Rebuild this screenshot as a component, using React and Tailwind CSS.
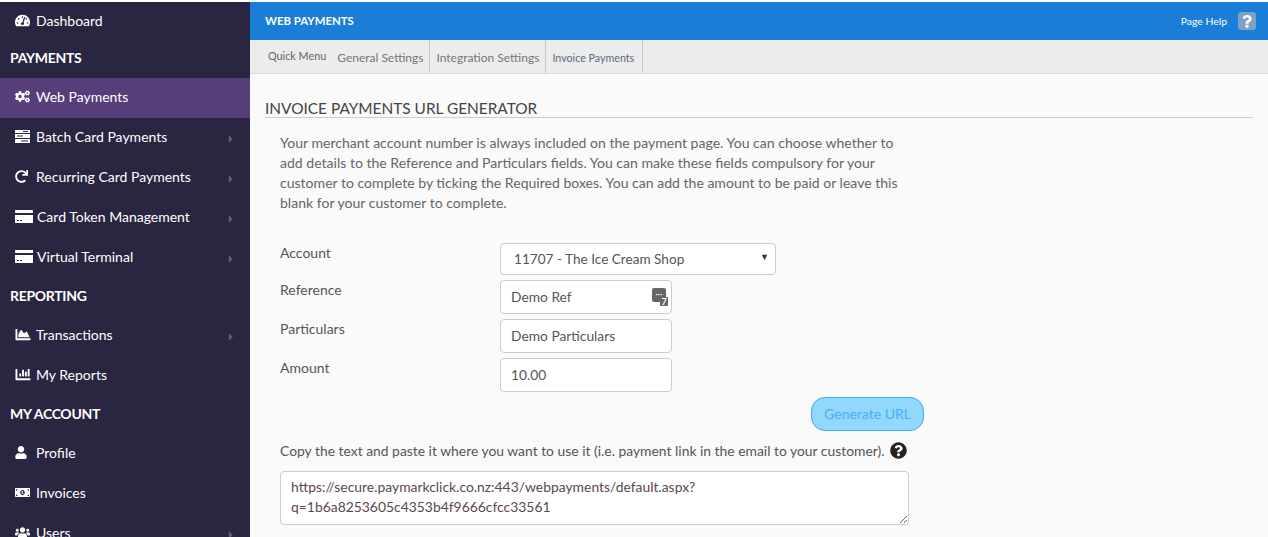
import React from 'react';
import { FaTachometerAlt, FaCogs, FaRedo, FaChartArea, FaChartBar, FaUser, FaMoneyBillAlt, FaUsers, FaCaretRight, FaQuestionCircle, FaQuestion } from 'react-icons/fa';

const FONT = "font-['Lato','Open_Sans',sans-serif]";

// FA4 style stacked bars
const BarsIcon = ({ className }) => (
  <svg className={className} viewBox="0 0 15 13" fill="currentColor">
    <rect x="0" y="0" width="15" height="3" />
    <rect x="0" y="4" width="15" height="4" />
    <rect x="0" y="9" width="15" height="4" />
    <rect x="8" y="1" width="5" height="1" fill="#2a2541" />
    <rect x="2" y="5.5" width="6" height="1" fill="#2a2541" />
    <rect x="6" y="10.5" width="7" height="1" fill="#2a2541" />
  </svg>
);

const CardIcon = ({ className }) => (
  <svg className={className} viewBox="0 0 18 13" fill="currentColor">
    <rect x="0" y="0" width="18" height="3" />
    <rect x="0" y="5" width="18" height="8" />
    <rect x="2" y="10" width="2" height="1" fill="#2a2541" />
    <rect x="5" y="10" width="2" height="1" fill="#2a2541" />
  </svg>
);

const NavItem = ({ icon: Icon, label, active, arrow, wide, iconCls, className = 'h-10 pb-[4px]' }) => (
  <div className={`flex items-center pl-[15px] pr-4 text-[14px] text-white ${className} ${active ? 'bg-[#573d7a]' : ''}`}>
    <span className={`flex items-center shrink-0 ${wide ? 'w-[22px]' : 'w-[21px]'}`}>
      <Icon className={iconCls || 'w-[15px] h-[15px]'} />
    </span>
    <span className="flex-1">{label}</span>
    {arrow && <FaCaretRight className="w-2 h-3 mt-[5px] ml-[1px] -mr-[1px] text-[#5f5c6e]" />}
  </div>
);

const NavHeading = ({ children }) => (
  <div className="h-[38px] pb-[4px] flex items-center pl-[10px] text-[14px] font-bold text-white tracking-[-0.3px]">{children}</div>
);

const Row = ({ label, children, className = '' }) => (
  <div className={`flex ${className}`}>
    <label className="w-[220px] text-[14px] leading-[19px] text-[#555]">{label}</label>
    {children}
  </div>
);

const inputCls = "w-[172px] h-[34px] rounded border border-[#ccc] bg-white px-[10px] pb-[2px] text-[13.8px] text-[#555] outline-none";

const TabLink = ({ children, small }) => (
  <div className={`flex items-center h-full px-[6px] pt-[3px] border-r border-[#c8c8c8] ${small ? 'text-[10.7px] pr-[8px] text-[#5a6b7d]' : 'text-[12px] text-[#777]'}`}>
    {children}
  </div>
);

export default function App() {
  return (
    <div className={`h-[537px] overflow-hidden bg-white pt-[2px] flex ${FONT}`}>
      {/* Sidebar */}
      <aside className="w-[250px] shrink-0 bg-[#2a2541] overflow-hidden">
        <NavItem icon={FaTachometerAlt} label="Dashboard" className="h-[38px] pb-[2px]" />
        <NavHeading>PAYMENTS</NavHeading>
        <NavItem icon={FaCogs} label="Web Payments" active />
        <NavItem icon={BarsIcon} label="Batch Card Payments" arrow iconCls="w-[15px] h-[13px]" />
        <NavItem icon={FaRedo} label="Recurring Card Payments" arrow iconCls="w-[13px] h-[13px]" />
        <NavItem icon={CardIcon} label="Card Token Management" arrow wide iconCls="w-[18px] h-[13px]" />
        <NavItem icon={CardIcon} label="Virtual Terminal" arrow wide iconCls="w-[18px] h-[13px]" />
        <NavHeading>REPORTING</NavHeading>
        <NavItem icon={FaChartArea} label="Transactions" arrow iconCls="w-[16px] h-[15px]" />
        <NavItem icon={FaChartBar} label="My Reports" iconCls="w-[16px] h-[15px]" />
        <NavHeading>MY ACCOUNT</NavHeading>
        <NavItem icon={FaUser} label="Profile" iconCls="w-[12px] h-[13px]" />
        <NavItem icon={FaMoneyBillAlt} label="Invoices" />
        <NavItem icon={FaUsers} label="Users" arrow />
      </aside>

      {/* Main */}
      <main className="flex-1 min-w-0 bg-[#fafafa]">
        <div className="h-[38px] bg-[#1a7dd7] flex items-center justify-between pl-[15px] pr-3 text-white">
          <span className="text-[11.4px] font-bold">WEB PAYMENTS</span>
          <div className="flex items-center gap-[11px]">
            <span className="text-[10.4px] pt-[2px]">Page Help</span>
            <span className="w-[18px] h-[18px] rounded-[3px] bg-[#7f9fc4] flex items-center justify-center">
              <FaQuestion className="w-[10px] h-[13px] text-white" />
            </span>
          </div>
        </div>

        <div className="h-[34px] bg-[#ececec] border-b border-[#ddd] flex items-center pl-[18px]">
          <span className="text-[10.8px] text-[#666] mr-[5px]">Quick Menu</span>
          <TabLink>General Settings</TabLink>
          <TabLink>Integration Settings</TabLink>
          <TabLink small>Invoice Payments</TabLink>
        </div>

        <div className="px-[15px] pt-[25px]">
          <h1 className="text-[15.4px] leading-[18px] text-[#444] border-b border-[#ccc]">INVOICE PAYMENTS URL GENERATOR</h1>

          <div className="pl-[15px]">
            <p className="w-[630px] mt-[15px] text-[14.05px] leading-[20px] text-[#666]">
              Your merchant account number is always included on the payment page. You can choose whether to add details to the Reference and Particulars fields. You can make these fields compulsory for your customer to complete by ticking the Required boxes. You can add the amount to be paid or leave this blank for your customer to complete.
            </p>

            <Row label="Account" className="mt-[30px]">
              <div className="relative w-[276px] h-[32px] rounded border border-[#ccc] bg-white flex items-center pl-[13px] text-[13.6px] text-[#555]">
                11707 - The Ice Cream Shop
                <span className="absolute right-[6px] top-[6px] text-[9px] text-[#333]">▼</span>
              </div>
            </Row>

            <Row label="Reference" className="mt-[5px]">
              <div className="relative">
                <input readOnly value="Demo Ref" className={inputCls} />
                <span className="absolute right-[4px] top-[8px] w-[16px] h-[18px]">
                  <span className="absolute left-0 top-0 w-[14px] h-[14px] rounded-[2px] bg-[#666] flex items-center justify-center pb-[3px] text-[9px] leading-none text-white">···</span>
                  <span className="absolute right-0 bottom-0 w-[8px] h-[9px] rounded-[1px] bg-[#666] text-[9px] leading-[9px] font-bold text-white text-center">7</span>
                </span>
              </div>
            </Row>

            <Row label="Particulars" className="mt-[5px]">
              <input readOnly value="Demo Particulars" className={inputCls} />
            </Row>

            <Row label="Amount" className="mt-[5px]">
              <input readOnly value="10.00" className={inputCls} />
            </Row>

            <div className="w-[644px] flex justify-end mt-[5px]">
              <button className="w-[113px] h-[34px] rounded-[14px] border border-[#36b0f5] bg-[#92d7fc] pb-[1px] text-[14px] text-[#45b2f3]">Generate URL</button>
            </div>

            <div className="flex items-center gap-[5px] mt-[9px] text-[13.88px] leading-[21px] text-[#555]">
              <span>Copy the text and paste it where you want to use it (i.e. payment link in the email to your customer).</span>
              <FaQuestionCircle className="w-[17px] h-[17px] text-[#222]" />
            </div>

            <textarea
              readOnly
              value={"https://secure.paymarkclick.co.nz:443/webpayments/default.aspx?\nq=1b6a8253605c4353b4f9666cfcc33561"}
              className="block w-[629px] h-[54px] mt-[10px] rounded border border-[#ccc] bg-white px-[10px] py-[5px] text-[13.9px] leading-[20px] text-[#5a4a4a] outline-none"
            />
          </div>
        </div>
      </main>
    </div>
  );
}
